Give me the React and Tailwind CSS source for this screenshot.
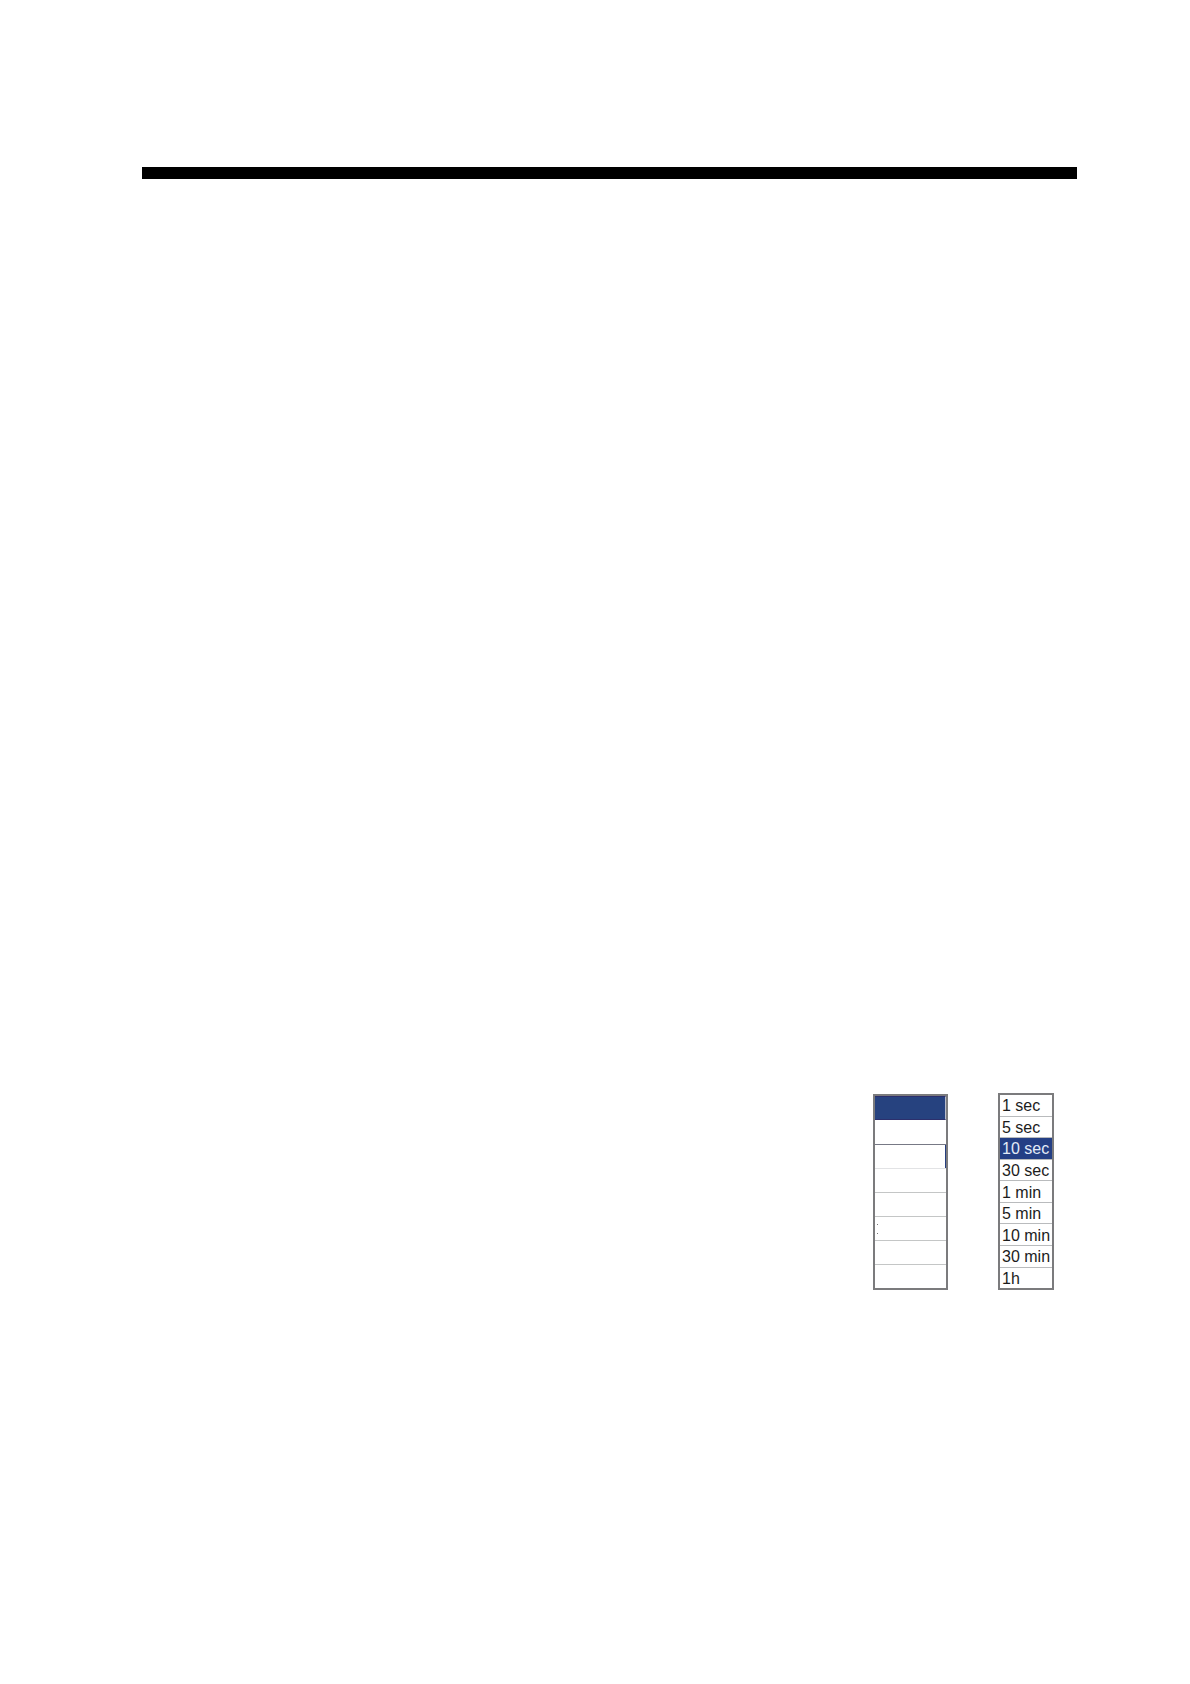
import React, { useState } from "react";

const intervals = ["1 sec", "5 sec", "10 sec", "30 sec", "1 min", "5 min", "10 min", "30 min", "1h"];

const blankRows = [
  "border-transparent",
  "border-transparent",
  "border-[#777985] shadow-[inset_-1px_0_0_#263f80]",
  "border-[#e2e3e5]",
  "border-[#c4c6c6]",
  "border-[#c4c6c6]",
  "border-[#c4c6c6]",
  "border-[#c4c6c6]",
];

function BlankList() {
  const [selected, setSelected] = useState(0);

  return (
    <ul className="mt-px w-[75px] border-2 border-[#7b7b7d]">
      {blankRows.map((row, index) => (
        <li key={index}>
          <button
            type="button"
            aria-label={`Option ${index + 1}`}
            aria-pressed={selected === index}
            onClick={() => setSelected(index)}
            className={`flex h-6 w-full flex-col items-start justify-center gap-2 px-0.5 ${
              selected === index
                ? "border-y border-r border-y-[#2c2f6c] border-r-[#b9bccb] bg-[#26427f]"
                : `border-t ${row}`
            }`}
          >
            {index === 5 && (
              <>
                <span className="h-px w-px bg-[#777777]" />
                <span className="h-px w-px bg-[#777777]" />
              </>
            )}
          </button>
        </li>
      ))}
    </ul>
  );
}

function IntervalList() {
  const [selected, setSelected] = useState("10 sec");

  return (
    <ul className="flex h-[197px] w-14 flex-col border-2 border-[#7b7b7d]">
      {intervals.map((label) => (
        <li key={label} className="flex flex-1 border-b border-[#b9bbbd] last:border-b-0">
          <button
            type="button"
            aria-pressed={selected === label}
            onClick={() => setSelected(label)}
            className={`w-full whitespace-nowrap pt-0.5 pl-0.5 text-left text-[16px] leading-[18px] ${
              selected === label ? "bg-[#243f85] text-[#e3ebf8]" : "text-[#1c1c1c]"
            }`}
          >
            {label}
          </button>
        </li>
      ))}
    </ul>
  );
}

function App() {
  return (
    <main className="min-h-screen bg-white pt-[167px] pr-[113px] pl-[142px] font-['Liberation_Sans',Arial,sans-serif]">
      <hr className="h-3 border-0 bg-black" />
      <div className="mt-[914px] flex items-start justify-end gap-[50px] pr-[23px]">
        <BlankList />
        <IntervalList />
      </div>
    </main>
  );
}

export default App;
